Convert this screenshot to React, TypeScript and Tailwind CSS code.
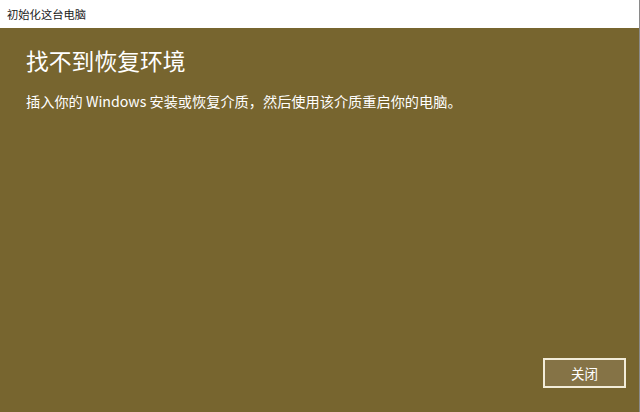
const font = { fontFamily: '"Segoe UI", "Noto Sans CJK SC", sans-serif' };

export default function App() {
  return (
    <div
      className="w-[640px] h-[412px] flex flex-col bg-[#77652f] border-r border-[#8a8a8a]"
      style={font}
    >
      {/* title bar */}
      <div className="h-[28px] bg-white flex items-center px-[7px] shrink-0">
        <span className="text-[11.3px] text-[#1a1a1a]">初始化这台电脑</span>
      </div>
      {/* body */}
      <div className="flex-1 flex flex-col px-[26px] pt-[18px] pb-[24px]">
        <h1 className="text-[22.8px] leading-[30px] text-white">找不到恢复环境</h1>
        <p className="mt-[15px] text-[14.2px] leading-[20px] text-white">
          插入你的 Windows 安装或恢复介质，然后使用该介质重启你的电脑。
        </p>
        <div className="flex-1" />
        <div className="flex justify-end mr-[-13px]">
          <button className="w-[83px] h-[30px] border-2 border-[#f2ecd9] bg-[#857346] text-white text-[13.5px]">
            关闭
          </button>
        </div>
      </div>
    </div>
  );
}
